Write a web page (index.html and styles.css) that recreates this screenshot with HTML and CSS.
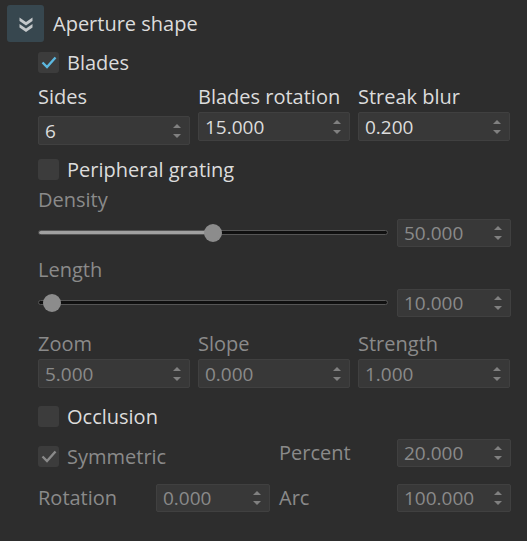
FILE: index.html
```html
<!DOCTYPE html>
<html lang="en">
<head>
    <meta charset="UTF-8">
    <title>Aperture shape</title>
    <link rel="stylesheet" href="styles.css">
</head>
<body>
    <div class="panel">
        <div class="header">
            <button class="toggle">
                <svg width="16" height="16" viewBox="0 0 16 16">
                    <path d="M1.5 1.5 L8 6 L14.5 1.5 L14.5 5 L8 9.5 L1.5 5 Z" fill="#c4c8ca"/>
                    <path d="M1.5 8 L8 12.5 L14.5 8 L14.5 11.5 L8 16 L1.5 11.5 Z" fill="#c4c8ca"/>
                </svg>
            </button>
            <span class="title">Aperture shape</span>
        </div>

        <div class="content">
            <label class="check-row blades">
                <span class="box checked">
                    <svg width="16" height="16" viewBox="0 0 16 16"><path d="M1.5 8.5 L6 13 L14.5 3.5" stroke="#5cb8e0" stroke-width="2.4" fill="none"/></svg>
                </span>
                <span class="text">Blades</span>
            </label>

            <div class="grid3 labels">
                <span class="lbl">Sides</span>
                <span class="lbl">Blades rotation</span>
                <span class="lbl">Streak blur</span>
            </div>
            <div class="grid3 spins">
                <div class="spin low"><span class="val">6</span><span class="arrows"><i class="up"></i><i class="down"></i></span></div>
                <div class="spin"><span class="val">15.000</span><span class="arrows"><i class="up"></i><i class="down"></i></span></div>
                <div class="spin"><span class="val">0.200</span><span class="arrows"><i class="up"></i><i class="down"></i></span></div>
            </div>

            <label class="check-row peripheral">
                <span class="box"></span>
                <span class="text">Peripheral grating</span>
            </label>

            <div class="lbl dim sub">Density</div>
            <div class="slider-row">
                <div class="slider">
                    <div class="groove"><div class="fill" style="width: 50%"></div></div>
                    <div class="handle" style="left: 50%"></div>
                </div>
                <div class="spin dim small"><span class="val">50.000</span><span class="arrows"><i class="up"></i><i class="down"></i></span></div>
            </div>

            <div class="lbl dim sub second">Length</div>
            <div class="slider-row">
                <div class="slider">
                    <div class="groove"><div class="fill" style="width: 0%"></div></div>
                    <div class="handle" style="left: 4%"></div>
                </div>
                <div class="spin dim small"><span class="val">10.000</span><span class="arrows"><i class="up"></i><i class="down"></i></span></div>
            </div>

            <div class="grid3 labels zoom-labels">
                <span class="lbl dim">Zoom</span>
                <span class="lbl dim">Slope</span>
                <span class="lbl dim">Strength</span>
            </div>
            <div class="grid3 spins">
                <div class="spin dim"><span class="val">5.000</span><span class="arrows"><i class="up"></i><i class="down"></i></span></div>
                <div class="spin dim"><span class="val">0.000</span><span class="arrows"><i class="up"></i><i class="down"></i></span></div>
                <div class="spin dim"><span class="val">1.000</span><span class="arrows"><i class="up"></i><i class="down"></i></span></div>
            </div>

            <label class="check-row occlusion">
                <span class="box"></span>
                <span class="text">Occlusion</span>
            </label>

            <div class="occ-grid">
                <label class="check-row dim">
                    <span class="box checked">
                        <svg width="16" height="16" viewBox="0 0 16 16"><path d="M1.5 8.5 L6 13 L14.5 3.5" stroke="#8a8a8a" stroke-width="2.4" fill="none"/></svg>
                    </span>
                    <span class="text">Symmetric</span>
                </label>
                <span class="lbl dim">Percent</span>
                <div class="spin dim small"><span class="val">20.000</span><span class="arrows"><i class="up"></i><i class="down"></i></span></div>

                <span class="lbl dim">Rotation</span>
                <div class="spin dim small"><span class="val">0.000</span><span class="arrows"><i class="up"></i><i class="down"></i></span></div>
                <span class="lbl dim">Arc</span>
                <div class="spin dim small"><span class="val">100.000</span><span class="arrows"><i class="up"></i><i class="down"></i></span></div>
            </div>
        </div>
    </div>
</body>
</html>
```

FILE: styles.css
```css
body {
    margin: 0;
    background-color: #2d2d2d;
    font-family: "Open Sans", "Noto Sans", sans-serif;
    font-size: 20px;
    color: #dcdcdc;
}

.panel {
    width: 527px;
    height: 541px;
    padding: 5px 16px 0 7px;
    box-sizing: border-box;
}

.header {
    display: flex;
    align-items: center;
    gap: 9px;
    height: 37px;
}

.toggle {
    width: 37px;
    height: 37px;
    padding: 0;
    border: none;
    border-radius: 3px;
    background-color: #37474f;
    display: flex;
    align-items: center;
    justify-content: center;
}

.title {
    font-size: 20px;
    color: #dcdcdc;
}

.content {
    padding-left: 31px;
}

.check-row {
    display: flex;
    align-items: center;
    gap: 8px;
    height: 22px;
}

.box {
    width: 21px;
    height: 21px;
    border-radius: 3px;
    background-color: #3c3c3c;
    display: flex;
    align-items: center;
    justify-content: center;
}

.blades { margin-top: 9px; }
.peripheral { margin-top: 13px; }
.occlusion { margin-top: 17px; }

.lbl {
    color: #dcdcdc;
    line-height: 22px;
    white-space: nowrap;
}

.dim { color: #8a8a8a; }
.dim .text { color: #8a8a8a; }

.grid3 {
    display: grid;
    grid-template-columns: 152px 152px 152px;
    column-gap: 8px;
}

.labels { margin-top: 13px; }
.spins { margin-top: 4px; align-items: start; }
.zoom-labels { margin-top: 16px; }

.spin {
    height: 29px;
    box-sizing: border-box;
    background-color: #383838;
    border: 1px solid #404040;
    border-radius: 2px;
    display: flex;
    align-items: center;
    justify-content: space-between;
    padding-left: 6px;
}

.spin.low { margin-top: 4px; }
.spin.small { width: 114px; height: 28px; }

.val {
    font-size: 19px;
    color: #dcdcdc;
}

.spin.dim .val { color: #8a8a8a; }

.arrows {
    width: 24px;
    display: flex;
    flex-direction: column;
    align-items: center;
    gap: 6px;
}

.arrows i {
    width: 0;
    height: 0;
    border-left: 4px solid transparent;
    border-right: 4px solid transparent;
}

.arrows .up { border-bottom: 4px solid #808080; }
.arrows .down { border-top: 4px solid #808080; }

.sub {
    margin-top: 10px;
    line-height: 20px;
}

.sub.second { margin-top: 13px; }

.slider-row {
    display: flex;
    align-items: center;
    justify-content: space-between;
    height: 28px;
    margin-top: 9px;
}

.slider {
    position: relative;
    width: 350px;
    height: 18px;
}

.groove {
    position: absolute;
    left: 0;
    right: 0;
    top: 6px;
    height: 5px;
    box-sizing: border-box;
    background-color: #101010;
    border: 1px solid #555555;
    border-radius: 3px;
    overflow: hidden;
}

.fill {
    height: 100%;
    background-color: #a0a0a0;
}

.handle {
    position: absolute;
    top: 0;
    width: 18px;
    height: 18px;
    margin-left: -9px;
    border-radius: 50%;
    background-color: #8c8c8c;
}

.occ-grid {
    display: grid;
    grid-template-columns: 118px 123px 118px 114px;
    grid-template-rows: 28px 28px;
    row-gap: 17px;
    align-items: center;
    margin-top: 12px;
}

.occ-grid .check-row {
    grid-column: span 2;
    margin-top: 6px;
}
```
